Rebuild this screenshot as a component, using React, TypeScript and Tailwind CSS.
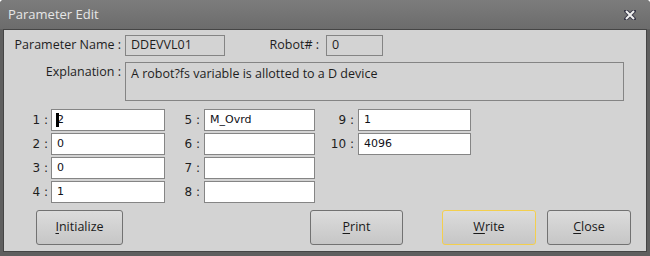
import React from 'react';

const ui = { fontFamily: '"Open Sans", "Noto Sans", sans-serif' };
const num = { fontFamily: '"DejaVu Sans", sans-serif' };

const Field = ({ label, value, labelW, inputW, gap, caret }: { label: string; value: string; labelW: string; inputW: string; gap: string; caret?: boolean }) => (
  <div className="flex items-center">
    <div className={`${labelW} ${gap} text-right text-[12px] text-[#1e1e1e] leading-none`} style={num}>
      {label} :
    </div>
    <div
      className={`${inputW} h-[22px] bg-white border border-[#858585] flex items-center pl-[5px] text-[11px] text-[#101018] relative`}
      style={num}
    >
      {caret && <span className="absolute left-[4px] top-[3px] w-[3px] h-[14px] bg-black" />}
      {value}
    </div>
  </div>
);

const Btn = ({ letter, rest, width, focused }: { letter: string; rest: string; width: string; focused?: boolean }) => (
  <button
    className={`${width} h-[35px] rounded-[3px] border ${
      focused ? 'border-[#f3cf4e]' : 'border-[#727272]'
    } bg-gradient-to-b from-[#dcdcdc] to-[#c6c6c6] text-[12.5px] text-[#1a1a1a]`}
    style={ui}
  >
    <span className="underline underline-offset-2">{letter}</span>
    {rest}
  </button>
);

export default function App() {
  return (
    <div className="w-[650px] h-[256px] bg-[#5f5f5f] flex flex-col rounded-t-[4px] overflow-hidden">
      {/* title bar */}
      <div className="h-[29px] shrink-0 bg-gradient-to-b from-[#7c7c7c] to-[#6c6c6c] flex items-center justify-between px-[8px]">
        <span className="text-[13px] text-[#e6e6e6]" style={ui}>
          Parameter Edit
        </span>
        <svg width="12" height="10" viewBox="0 0 12 10" className="mr-[6px]">
          <path d="M2 1 L10 9 M10 1 L2 9" stroke="#3a3a4a" strokeWidth="4" strokeLinecap="square" />
          <path d="M2 1 L10 9 M10 1 L2 9" stroke="#f0f0f0" strokeWidth="2" />
        </svg>
      </div>

      {/* client */}
      <div className="mx-[3px] mb-[4px] flex-1 border border-[#454545] bg-[#d3d3d3] flex flex-col">
        <div className="flex items-center mt-[5px]">
          <div className="w-[117px] text-right text-[12.5px] text-[#1e1e1e]" style={ui}>
            Parameter Name :
          </div>
          <div className="ml-[4px] w-[100px] h-[21px] border border-[#848484] flex items-center pl-[5px] text-[12.5px] text-[#1e1e1e]" style={ui}>
            DDEVVL01
          </div>
          <div className="w-[94px] text-right text-[12.5px] text-[#1e1e1e]" style={ui}>
            Robot# :
          </div>
          <div className="ml-[7px] w-[57px] h-[21px] border border-[#848484] flex items-center pl-[5px] text-[12.5px] text-[#1e1e1e]" style={ui}>
            0
          </div>
        </div>

        <div className="flex items-start mt-[6px]">
          <div className="w-[117px] text-right text-[12.5px] text-[#1e1e1e] mt-[1px]" style={ui}>
            Explanation :
          </div>
          <div className="ml-[4px] w-[499px] h-[39px] border border-[#848484] pl-[5px] pt-[2px] text-[12.5px] text-[#1e1e1e]" style={ui}>
            A robot?fs variable is allotted to a D device
          </div>
        </div>

        <div className="flex mt-[8px]">
          <div className="flex flex-col gap-[2px]">
            <Field label="1" value="2" labelW="w-[44px]" gap="mr-[3px]" inputW="w-[114px]" caret />
            <Field label="2" value="0" labelW="w-[44px]" gap="mr-[3px]" inputW="w-[114px]" />
            <Field label="3" value="0" labelW="w-[44px]" gap="mr-[3px]" inputW="w-[114px]" />
            <Field label="4" value="1" labelW="w-[44px]" gap="mr-[3px]" inputW="w-[114px]" />
          </div>
          <div className="flex flex-col gap-[2px]">
            <Field label="5" value="M_Ovrd" labelW="w-[35px]" gap="mr-[4px]" inputW="w-[111px]" />
            <Field label="6" value="" labelW="w-[35px]" gap="mr-[4px]" inputW="w-[111px]" />
            <Field label="7" value="" labelW="w-[35px]" gap="mr-[4px]" inputW="w-[111px]" />
            <Field label="8" value="" labelW="w-[35px]" gap="mr-[4px]" inputW="w-[111px]" />
          </div>
          <div className="flex flex-col gap-[2px]">
            <Field label="9" value="1" labelW="w-[39px]" gap="mr-[4px]" inputW="w-[113px]" />
            <Field label="10" value="4096" labelW="w-[39px]" gap="mr-[4px]" inputW="w-[113px]" />
          </div>
        </div>

        <div className="flex mt-[7px]">
          <div className="ml-[32px]">
            <Btn letter="I" rest="nitialize" width="w-[87px]" />
          </div>
          <div className="ml-[187px]">
            <Btn letter="P" rest="rint" width="w-[93px]" />
          </div>
          <div className="ml-[39px]">
            <Btn letter="W" rest="rite" width="w-[94px]" focused />
          </div>
          <div className="ml-[11px]">
            <Btn letter="C" rest="lose" width="w-[84px]" />
          </div>
        </div>
      </div>
    </div>
  );
}
